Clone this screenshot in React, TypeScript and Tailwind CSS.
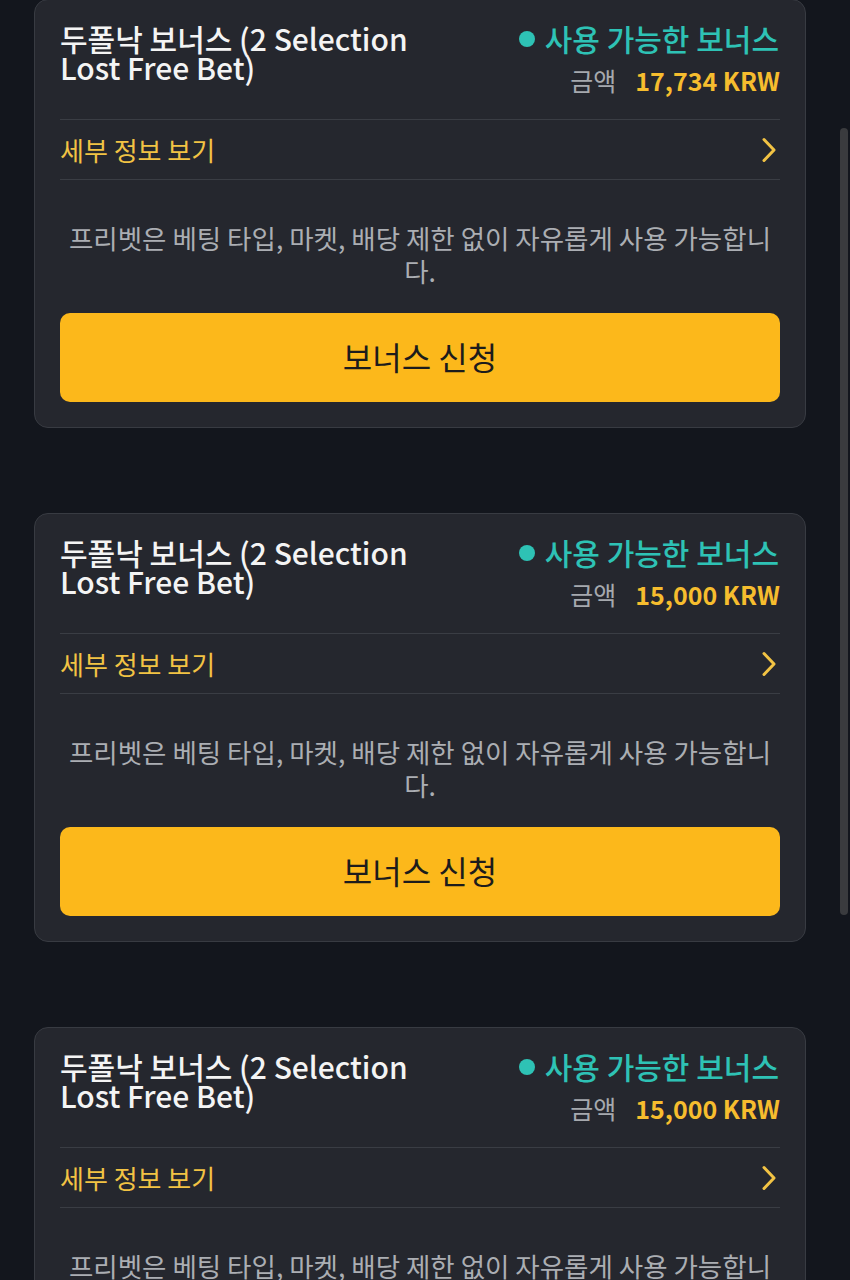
import React from "react";

const FONT = { fontFamily: '"Noto Sans CJK KR", "Noto Sans", sans-serif' };

function Card({ amount }: { amount: string }) {
  return (
    <div className="rounded-[14px] border border-[#383b42] bg-[#25272e] px-[25px] pt-[26px] pb-[25px]">
      <div className="flex justify-between mt-[-2px]">
        <div className="text-[30px] leading-[29px] font-medium text-[#f4f4f4] w-[365px]">
          두폴낙 보너스 (2 Selection Lost Free Bet)
        </div>
        <div className="flex flex-col items-end">
          <div className="flex items-center h-[29px] text-[30px] leading-[29px] font-medium text-[#2ec2b5]">
            <span className="inline-block w-[16px] h-[16px] rounded-full bg-[#2ec2b5] mr-[10px]" />
            <span className="mr-[1px]">사용 가능한 보너스</span>
          </div>
          <div className="mt-[13px] h-[29px] flex items-center text-[25px] leading-[29px]">
            <span className="text-[#a6a9ae]">금액</span>
            <span className="ml-[19px] font-bold text-[#f6bd2e]">{amount}</span>
          </div>
        </div>
      </div>
      <div className="mt-[24px] h-px bg-[#3a3d44]" />
      <div className="h-[59px] flex items-center justify-between">
        <span className="text-[26px] text-[#f2c344]">세부 정보 보기</span>
        <svg width="16" height="26" viewBox="0 0 16 26" className="mr-[3px]">
          <polyline points="3,2.5 13,13 3,23.5" fill="none" stroke="#f2c344" strokeWidth="3" strokeLinecap="round" strokeLinejoin="round" />
        </svg>
      </div>
      <div className="h-px bg-[#3a3d44]" />
      <div className="mt-[41px] px-[6px] text-center text-[26.5px] leading-[33px] text-[#abaeb3]">
        프리벳은 베팅 타입, 마켓, 배당 제한 없이 자유롭게 사용 가능합니다.
      </div>
      <button className="mt-[26px] w-full h-[89px] rounded-[10px] bg-[#fcb81b] text-[32px] text-[#1c1c1c] flex items-center justify-center pb-[3px]">
        보너스 신청
      </button>
    </div>
  );
}

export default function App() {
  return (
    <div style={FONT} className="relative min-h-[1280px] h-[1280px] overflow-hidden bg-[#13161d]">
      <div className="pl-[34px] pr-[44px] mt-[-1px] flex flex-col gap-[85px]">
        <Card amount="17,734 KRW" />
        <Card amount="15,000 KRW" />
        <Card amount="15,000 KRW" />
      </div>
      <div className="absolute left-[840px] top-[128px] w-[8px] h-[787px] rounded-full bg-[#3a3b3e]" />
    </div>
  );
}
